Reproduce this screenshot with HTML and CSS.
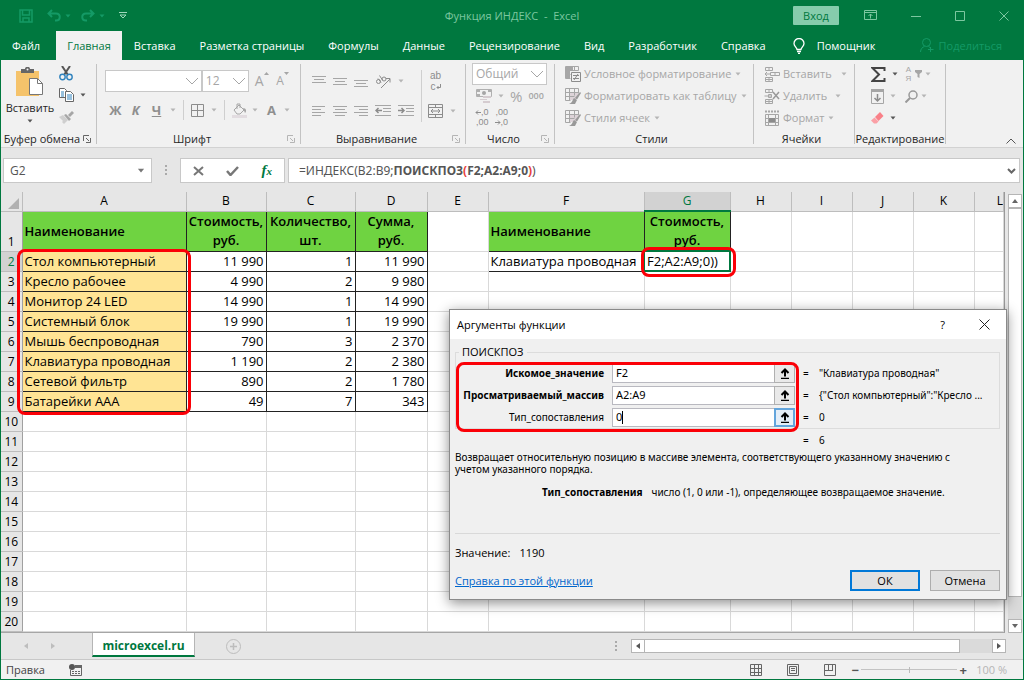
FILE: index.html
```
<!DOCTYPE html>
<html lang="ru">
<head>
<meta charset="utf-8">
<title>Функция ИНДЕКС - Excel</title>
<link rel="stylesheet" href="styles.css">
</head>
<body>
<svg class="sprite" aria-hidden="true">
  <symbol id="caret" viewBox="0 0 6 4"><path d="M0.5 0.5h5L3 3.5z" fill="currentColor"/></symbol>
  <symbol id="chev" viewBox="0 0 14 8"><path d="M1 1l6 6 6-6" fill="none" stroke="currentColor"/></symbol>
  <symbol id="launch" viewBox="0 0 8 8"><path d="M.5 6V.5H6M3 3l3 3M7.500 3v4.500H3" fill="none" stroke="currentColor"/></symbol>
  <symbol id="pick" viewBox="0 0 10 11"><path d="M1 10.500h8" stroke="#000" stroke-width="1.500"/><path d="M5 8.500V2M1.500 5L5 1.500 8.500 5" fill="none" stroke="#000" stroke-width="2"/></symbol>
  <symbol id="tablebrush" viewBox="0 0 16 16"><path d="M5 5h8v5l-4 2H5z" fill="#ddd3d8"/><path d="M.5 .5h13v5M.5 .5v12h5M.5 4.500h13M.5 8.500h9M4.500 .5v12M9.500 .5v7" fill="none" stroke="#a6a6a6"/><path d="M15 4l-5 6 2 1.500L16 5z" fill="#999"/><path d="M9 10l3 2-2 4H4c3-1 3-3 5-6z" fill="#999"/></symbol>
</svg>
<div class="app">
  <header class="titlebar">
    <div class="quick">
      <button class="plain" aria-label="Сохранить"><svg width="14" height="14" viewBox="0 0 14 14"><path d="M1 1h12v12H1zM3.500 1v5h7V1M4 13V9h6v4" fill="none" stroke="currentColor" stroke-width="1.500"/></svg></button>
      <button class="plain undo" aria-label="Отменить"><svg width="14" height="13" viewBox="0 0 14 13"><path d="M5 1L1.500 4.500 5 8M2 4.500h7c5 0 5 7 0 7H8" fill="none" stroke="currentColor" stroke-width="2"/></svg><svg class="caret"><use href="#caret"/></svg></button>
      <button class="plain redo" aria-label="Вернуть"><svg width="14" height="13" viewBox="0 0 14 13"><path d="M9 1l3.500 3.500L9 8M12 4.500H5c-5 0-5 7 0 7h1" fill="none" stroke="currentColor" stroke-width="2"/></svg><svg class="caret"><use href="#caret"/></svg></button>
      <button class="plain more" aria-label="Настройка панели"><svg width="8" height="8" viewBox="0 0 8 8"><path d="M0 .5h8M1 3l3 3 3-3z" fill="none" stroke="currentColor"/></svg></button>
    </div>
    <div class="doc-title">Функция ИНДЕКС&nbsp; -&nbsp; Excel</div>
    <div class="window">
      <button class="login">Вход</button>
      <button class="plain" aria-label="Параметры ленты"><svg width="13" height="11" viewBox="0 0 13 11"><path d="M.5 .5h12v9H.5zM.5 2.500h12M6.500 8.500V4M4.500 6l2-2 2 2" fill="none" stroke="currentColor"/></svg></button>
      <button class="plain" aria-label="Свернуть"><svg width="10" height="10" viewBox="0 0 10 10"><path d="M0 5.500h10" stroke="currentColor"/></svg></button>
      <button class="plain" aria-label="Развернуть"><svg width="10" height="10" viewBox="0 0 10 10"><path d="M.5 .5h9v9h-9z" fill="none" stroke="currentColor"/></svg></button>
      <button class="plain" aria-label="Закрыть"><svg width="10" height="10" viewBox="0 0 10 10"><path d="M.5 .5l9 9M9.500 .5l-9 9" stroke="currentColor"/></svg></button>
    </div>
  </header>

  <nav class="tabs">
    <button class="tab">Файл</button>
    <button class="tab active">Главная</button>
    <button class="tab">Вставка</button>
    <button class="tab">Разметка страницы</button>
    <button class="tab">Формулы</button>
    <button class="tab">Данные</button>
    <button class="tab">Рецензирование</button>
    <button class="tab">Вид</button>
    <button class="tab">Разработчик</button>
    <button class="tab">Справка</button>
    <button class="tab tell"><svg width="12" height="16" viewBox="0 0 12 16"><path d="M4 11.500c0-2-3-3-3-6a5 5 0 0 1 10 0c0 3-3 4-3 6zM4 13.500h4M5 15.500h2" fill="none" stroke="currentColor" stroke-width="1.300"/></svg>Помощник</button>
    <button class="tab share"><svg width="14" height="15" viewBox="0 0 14 15"><circle cx="6.500" cy="4.500" r="4" fill="none" stroke="currentColor"/><path d="M.5 14c0-3 2-5 4-5.500M8.500 8.500l1.500 1M10.500 9v5M8 11.500h5.500" fill="none" stroke="currentColor"/></svg>Поделиться</button>
  </nav>

  <section class="ribbon">
    <div class="group g-clip">
      <div class="tools">
        <button class="plain paste"><svg width="28" height="30" viewBox="0 0 28 30"><path d="M0 4h23v25H0z" fill="#f5c36b"/><path d="M5 2h4c0-3 5-3 5 0h4v4H5z" fill="#666"/><circle cx="11.500" cy="2.500" r="1" fill="#f1f1f1"/><path d="M13.500 11.500h8l5 5v11h-13z" fill="#fff" stroke="#777"/><path d="M21.500 11.500v5h5" fill="none" stroke="#777"/></svg><span>Вставить</span><svg class="caret dark"><use href="#caret"/></svg></button>
        <div class="stack">
          <button class="plain" aria-label="Вырезать"><svg width="14" height="15" viewBox="0 0 14 15"><path d="M3 0l6 9M11 0L5 9" stroke="#555" stroke-width="2"/><circle cx="3.500" cy="11" r="2.700" fill="none" stroke="#2f82bd" stroke-width="1.400"/><circle cx="10.500" cy="11" r="2.700" fill="none" stroke="#2f82bd" stroke-width="1.400"/></svg></button>
          <button class="plain" aria-label="Копировать"><svg width="15" height="14" viewBox="0 0 15 14"><path d="M.5 .5h5l2 2v7h-7z" fill="#fff" stroke="#666"/><path d="M2 4h3M2 6h3M2 8h3" stroke="#2f82bd"/><path d="M6.500 3.500h5l3 3v7h-8z" fill="#fff" stroke="#666"/><path d="M8 7h5M8 9h5M8 11h5" stroke="#2f82bd"/></svg><svg class="caret dark"><use href="#caret"/></svg></button>
          <button class="plain" aria-label="Формат по образцу"><svg width="15" height="13" viewBox="0 0 15 13"><path d="M0 6l4-2 5 5-4 4-2-2 1-1z" fill="#cfcfcf"/><path d="M5 4l2-1 5 5-2 2zM9 4l4-4 2 2-4 4z" fill="#a6a6a6"/></svg></button>
        </div>
      </div>
      <footer><span>Буфер обмена</span><svg class="launch dark"><use href="#launch"/></svg></footer>
    </div>

    <div class="group g-font">
      <div class="tools rows">
        <div class="row">
          <span class="combo wide"><select aria-label="Шрифт"><option></option></select><svg class="chev"><use href="#chev"/></svg></span>
          <span class="combo size"><select aria-label="Размер шрифта"><option>12</option></select><svg class="chev"><use href="#chev"/></svg></span>
          <button class="plain grow">A<svg width="5" height="3" viewBox="0 0 5 3"><path d="M0 3h5L2.500 0z" fill="currentColor"/></svg></button>
          <button class="plain grow small">A<svg width="5" height="3" viewBox="0 0 5 3"><path d="M0 0h5L2.500 3z" fill="currentColor"/></svg></button>
        </div>
        <div class="letters">
          <button class="plain">Ж</button><button class="plain ital">К</button><button class="plain under">Ч</button><svg class="caret"><use href="#caret"/></svg>
          <i class="bar"></i>
          <button class="plain" aria-label="Границы"><svg width="13" height="13" viewBox="0 0 13 13"><path d="M.5 .5h12v12H.5zM.5 6.500h12M6.500 .5v12" fill="none" stroke="#8c8c8c"/></svg></button><svg class="caret"><use href="#caret"/></svg>
          <i class="bar"></i>
          <button class="plain" aria-label="Цвет заливки"><svg width="15" height="15" viewBox="0 0 15 15"><path d="M2 7l5-5 5 5-4 4H5zM5 6V1h3v4" fill="#f1f1f1" stroke="#a6a6a6"/><path d="M11 5c3 0 4 3 2 5z" fill="#a6a6a6"/><path d="M0 12h15v3H0z" fill="#e2dce0"/></svg></button><svg class="caret"><use href="#caret"/></svg>
          <button class="plain">А</button><svg class="caret"><use href="#caret"/></svg>
        </div>
      </div>
      <footer><span>Шрифт</span><svg class="launch"><use href="#launch"/></svg></footer>
    </div>

    <div class="group g-align">
      <div class="tools">
        <div class="alignments">
          <button class="plain" aria-label="По верхнему краю"><svg width="14" height="11" viewBox="0 0 14 11"><path d="M0 .5h14M2 3.500h10M0 6.500h14" stroke="#a6a6a6"/></svg></button>
          <button class="plain" aria-label="По середине"><svg width="14" height="11" viewBox="0 0 14 11"><path d="M0 2.500h14M2 5.500h10M0 8.500h14" stroke="#a6a6a6"/></svg></button>
          <button class="plain" aria-label="По нижнему краю"><svg width="14" height="11" viewBox="0 0 14 11"><path d="M0 4.500h14M2 7.500h10M0 10.500h14" stroke="#a6a6a6"/></svg></button>
          <button class="plain orient" aria-label="Ориентация"><svg width="16" height="15" viewBox="0 0 16 15"><circle cx="3.500" cy="7.500" r="2" fill="none" stroke="#8c8c8c"/><circle cx="9" cy="5" r="2" fill="none" stroke="#8c8c8c"/><path d="M3 4.500l3 4M4.500 1.500l3 4.500M6 14L15 5M11 4.500h4v4" fill="none" stroke="#8c8c8c"/></svg></button><svg class="caret"><use href="#caret"/></svg>
          <button class="plain" aria-label="По левому краю"><svg width="14" height="11" viewBox="0 0 14 11"><path d="M0 .5h13M0 3.500h9M0 6.500h13M0 9.500h9" stroke="#a6a6a6"/></svg></button>
          <button class="plain" aria-label="По центру"><svg width="14" height="11" viewBox="0 0 14 11"><path d="M0 .5h14M2 3.500h10M0 6.500h14M2 9.500h10" stroke="#a6a6a6"/></svg></button>
          <button class="plain" aria-label="По правому краю"><svg width="14" height="11" viewBox="0 0 14 11"><path d="M0 .5h14M5 3.500h9M0 6.500h14M5 9.500h9" stroke="#a6a6a6"/></svg></button>
          <button class="plain" aria-label="Уменьшить отступ"><svg width="16" height="12" viewBox="0 0 16 12"><path d="M0 .5h16M8 3.500h8M8 6.500h8M0 10.500h16" stroke="#a6a6a6"/><path d="M7 5.500H1M3.500 3L1 5.500 3.500 8" fill="none" stroke="#8c8c8c" stroke-width="1.500"/></svg></button>
          <button class="plain" aria-label="Увеличить отступ"><svg width="16" height="12" viewBox="0 0 16 12"><path d="M0 .5h16M8 3.500h8M8 6.500h8M0 10.500h16" stroke="#a6a6a6"/><path d="M0 5.500h6M3.500 3L6 5.500 3.500 8" fill="none" stroke="#8c8c8c" stroke-width="1.500"/></svg></button>
        </div>
        <i class="bar tall"></i>
        <div class="wraps">
          <button class="plain wrap"><span>ab</span><span>c<svg width="5" height="6" viewBox="0 0 5 6"><path d="M4.500 0v3.500H1M2.500 2L1 3.500 2.500 5" fill="none" stroke="currentColor"/></svg></span></button>
          <button class="plain" aria-label="Объединить"><svg width="15" height="14" viewBox="0 0 15 14"><path d="M.5 .5h14v13H.5zM.5 3.500h14M.5 10.500h14M7.500 .5v3M7.500 10.500v3M3 7h9M5 5L3 7l2 2M10 5l2 2-2 2" fill="none" stroke="#8c8c8c"/></svg><svg class="caret"><use href="#caret"/></svg></button>
        </div>
      </div>
      <footer><span>Выравнивание</span><svg class="launch"><use href="#launch"/></svg></footer>
    </div>

    <div class="group g-num">
      <div class="tools rows">
        <span class="combo fmt"><select aria-label="Числовой формат"><option>Общий</option></select><svg class="chev"><use href="#chev"/></svg></span>
        <div class="row numrow">
          <button class="plain" aria-label="Финансовый"><svg width="16" height="14" viewBox="0 0 16 14"><path d="M.5 .5h15v7H.5z" fill="none" stroke="#b0b0b0"/><path d="M1 1h3v2H1zM12 1h3v2h-3zM1 5h3v2H1z" fill="#b0b0b0"/><circle cx="8" cy="4" r="2" fill="#a6a6a6"/><path d="M7 7h8v2H7zM4 10h7v1H4zM7 12h7v2H7z" fill="#d5ccd0"/></svg></button><svg class="caret"><use href="#caret"/></svg>
          <button class="plain pct">%</button><button class="plain ooo">000</button>
        </div>
        <div class="row decrow">
          <button class="plain dec"><span><svg width="6" height="5" viewBox="0 0 6 5"><path d="M6 2.500H1M3 .5l-2 2 2 2" fill="none" stroke="currentColor"/></svg>,0</span><span>,00</span></button>
          <button class="plain dec"><span>,00</span><span><svg width="6" height="5" viewBox="0 0 6 5"><path d="M0 2.500h5M3 .5l2 2-2 2" fill="none" stroke="currentColor"/></svg>,0</span></button>
        </div>
      </div>
      <footer><span>Число</span><svg class="launch"><use href="#launch"/></svg></footer>
    </div>

    <div class="group g-styles">
      <div class="tools list">
        <button class="plain"><svg width="16" height="16" viewBox="0 0 16 16"><path d="M.5 .5h13v4M.5 .5v12h5M.5 4.500h13M.5 8.500h5M4.500 .5v12M9.500 .5v4" fill="none" stroke="#a6a6a6"/><path d="M1 1h7v3H1zM1 5h3v7H1z" fill="#a6a6a6"/><path d="M6.500 6.500h9v9h-9z" fill="#f1f1f1" stroke="#8c8c8c"/><path d="M8 9.500h6M8 12.500h6M13 8l-4 6" stroke="#8c8c8c"/></svg>Условное форматирование<svg class="caret"><use href="#caret"/></svg></button>
        <button class="plain"><svg width="16" height="16"><use href="#tablebrush"/></svg>Форматировать как таблицу<svg class="caret"><use href="#caret"/></svg></button>
        <button class="plain"><svg width="16" height="16"><use href="#tablebrush"/></svg>Стили ячеек<svg class="caret"><use href="#caret"/></svg></button>
      </div>
      <footer><span>Стили</span></footer>
    </div>

    <div class="group g-cells">
      <div class="tools list">
        <button class="plain w1"><svg width="16" height="15" viewBox="0 0 16 15"><path d="M1.500 .5h7v3h-7zM5 .5v3M1.500 10.500h7v4h-7zM5 10.500v4M1 12.500h8M6.500 5.500h9v3h-9zM11 5.500v3M6 7H1M3 5L1 7l2 2" fill="none" stroke="#a6a6a6"/></svg><span>Вставить</span><svg class="caret"><use href="#caret"/></svg></button>
        <button class="plain w2"><svg width="16" height="15" viewBox="0 0 16 15"><path d="M1.500 .5h7v3h-7zM5 .5v3M1.500 10.500h7v4h-7zM5 10.500v4M1 12.500h8M.5 7h7M4.500 5.500h3v3h-3z" fill="none" stroke="#a6a6a6"/><path d="M9 3l6 7M15 3L9 10" stroke="#999" stroke-width="1.500"/></svg><span>Удалить</span><svg class="caret"><use href="#caret"/></svg></button>
        <button class="plain"><svg width="16" height="16" viewBox="0 0 16 16"><path d="M1.500 4.500h13v11h-13zM1 8.500h14M1 12.500h14M4.500 5v10M11.500 5v10" fill="none" stroke="#a6a6a6"/><path d="M5 8h6v4H5z" fill="#8c8c8c"/><path d="M1 1.500h14" stroke="#a6a6a6" stroke-width="2" stroke-dasharray="2 1"/></svg><span>Формат</span><svg class="caret"><use href="#caret"/></svg></button>
      </div>
      <footer><span>Ячейки</span></footer>
    </div>

    <div class="group g-edit">
      <div class="tools edits">
        <button class="plain" aria-label="Сумма"><svg width="15" height="15" viewBox="0 0 15 15"><path d="M13.500 4V1H1.500l6.500 6.500L1.500 14h12v-3" fill="none" stroke="#444" stroke-width="2"/></svg><svg class="caret dark"><use href="#caret"/></svg></button>
        <button class="plain" aria-label="Сортировка и фильтр"><span class="az"><span>А</span><span>Я</span></span><svg width="7" height="8" viewBox="0 0 7 8"><path d="M0 0h7v2L4.500 4v4l-2-1V4L0 2z" fill="currentColor"/></svg><svg class="caret"><use href="#caret"/></svg></button>
        <button class="plain" aria-label="Заполнить"><svg width="13" height="15" viewBox="0 0 13 15"><path d="M.5 .5h12v14H.5z" fill="none" stroke="#a6a6a6"/><path d="M0 0h13v3H0z" fill="#a6a6a6"/><path d="M6.500 5v7M3.500 9l3 3 3-3" fill="none" stroke="#8c8c8c" stroke-width="1.500"/></svg><svg class="caret"><use href="#caret"/></svg></button>
        <button class="plain" aria-label="Найти и выделить"><svg width="13" height="13" viewBox="0 0 13 13"><circle cx="8" cy="5" r="4" fill="none" stroke="#999" stroke-width="1.500"/><path d="M5 8l-4.500 4.500" stroke="#999" stroke-width="2"/></svg><svg class="caret"><use href="#caret"/></svg></button>
        <button class="plain" aria-label="Очистить"><svg width="13" height="12" viewBox="0 0 13 12"><path d="M4 5l5-5 3.500 4-5 5z" fill="#f98088"/><path d="M3.500 5.500l4 4-2 2H3L0 8.500z" fill="#fba0a6"/></svg><svg class="caret dark"><use href="#caret"/></svg></button>
      </div>
      <footer><span>Редактирование</span></footer>
    </div>
    <button class="plain collapse" aria-label="Свернуть ленту"><svg width="10" height="6" viewBox="0 0 10 6"><path d="M.5 5.500L5 1l4.500 4.500" fill="none" stroke="#555"/></svg></button>
  </section>

  <section class="formula-bar">
    <div class="namebox"><input aria-label="Имя" value="G2"><svg class="caret big"><use href="#caret"/></svg></div>
    <span class="dots"></span>
    <div class="fx">
      <button class="plain" aria-label="Отмена ввода"><svg width="11" height="10" viewBox="0 0 11 10"><path d="M1 1l9 8M10 1L1 9" stroke="#777" stroke-width="2"/></svg></button>
      <button class="plain" aria-label="Ввод"><svg width="13" height="10" viewBox="0 0 13 10"><path d="M1 5l3.500 4L12 1" fill="none" stroke="#777" stroke-width="2.500"/></svg></button>
      <button class="plain fxbtn" aria-label="Вставить функцию"><em>f</em><sub>x</sub></button>
    </div>
    <div class="formula"><code>=ИНДЕКС(B2:B9;<b>ПОИСКПОЗ<span class="red">(</span>F2;A2:A9;0<span class="red">)</span></b>)</code><svg width="9" height="6" viewBox="0 0 9 6"><path d="M1 1l3.500 3.500L8 1" fill="none" stroke="#666" stroke-width="2"/></svg></div>
  </section>

  <main class="sheet">
    <div class="viewport">
      <table>
        <colgroup><col class="c0"><col class="ca"><col class="cb"><col class="cc"><col class="cd"><col class="cn"><col class="cf"><col class="cg"><col class="cn"><col class="cn"><col class="cn"><col class="cn"><col></colgroup>
        <thead><tr><th class="corner"><svg width="11" height="11" viewBox="0 0 11 11"><path d="M11 0v11H0z" fill="#b1b1b1"/></svg></th><th>A</th><th>B</th><th>C</th><th>D</th><th>E</th><th>F</th><th class="sel">G</th><th>H</th><th>I</th><th>J</th><th>K</th><th class="last">L</th></tr></thead>
        <tbody>
        <tr class="head"><th>1</th><td class="h l">Наименование</td><td class="h">Стоимость, руб.</td><td class="h">Количество, шт.</td><td class="h">Сумма, руб.</td><td></td><td class="h l">Наименование</td><td class="h">Стоимость, руб.</td><td></td><td></td><td></td><td></td><td></td></tr>
        <tr><th class="sel">2</th><td class="y">Стол компьютерный</td><td class="n">11 990</td><td class="n">1</td><td class="n">11 990</td><td></td><td class="t">Клавиатура проводная</td><td class="edit">F2;A2:A9;0))</td><td></td><td></td><td></td><td></td><td></td></tr>
        <tr><th>3</th><td class="y">Кресло рабочее</td><td class="n">4 990</td><td class="n">2</td><td class="n">9 980</td><td></td><td></td><td></td><td></td><td></td><td></td><td></td><td></td></tr>
        <tr><th>4</th><td class="y">Монитор 24 LED</td><td class="n">14 990</td><td class="n">1</td><td class="n">14 990</td><td></td><td></td><td></td><td></td><td></td><td></td><td></td><td></td></tr>
        <tr><th>5</th><td class="y">Системный блок</td><td class="n">19 990</td><td class="n">1</td><td class="n">19 990</td><td></td><td></td><td></td><td></td><td></td><td></td><td></td><td></td></tr>
        <tr><th>6</th><td class="y">Мышь беспроводная</td><td class="n">790</td><td class="n">3</td><td class="n">2 370</td><td></td><td></td><td></td><td></td><td></td><td></td><td></td><td></td></tr>
        <tr><th>7</th><td class="y">Клавиатура проводная</td><td class="n">1 190</td><td class="n">2</td><td class="n">2 380</td><td></td><td></td><td></td><td></td><td></td><td></td><td></td><td></td></tr>
        <tr><th>8</th><td class="y">Сетевой фильтр</td><td class="n">890</td><td class="n">2</td><td class="n">1 780</td><td></td><td></td><td></td><td></td><td></td><td></td><td></td><td></td></tr>
        <tr><th>9</th><td class="y">Батарейки ААА</td><td class="n">49</td><td class="n">7</td><td class="n">343</td><td></td><td></td><td></td><td></td><td></td><td></td><td></td><td></td></tr>
        <tr><th>10</th><td></td><td></td><td></td><td></td><td></td><td></td><td></td><td></td><td></td><td></td><td></td><td></td></tr>
        <tr><th>11</th><td></td><td></td><td></td><td></td><td></td><td></td><td></td><td></td><td></td><td></td><td></td><td></td></tr>
        <tr><th>12</th><td></td><td></td><td></td><td></td><td></td><td></td><td></td><td></td><td></td><td></td><td></td><td></td></tr>
        <tr><th>13</th><td></td><td></td><td></td><td></td><td></td><td></td><td></td><td></td><td></td><td></td><td></td><td></td></tr>
        <tr><th>14</th><td></td><td></td><td></td><td></td><td></td><td></td><td></td><td></td><td></td><td></td><td></td><td></td></tr>
        <tr><th>15</th><td></td><td></td><td></td><td></td><td></td><td></td><td></td><td></td><td></td><td></td><td></td><td></td></tr>
        <tr><th>16</th><td></td><td></td><td></td><td></td><td></td><td></td><td></td><td></td><td></td><td></td><td></td><td></td></tr>
        <tr><th>17</th><td></td><td></td><td></td><td></td><td></td><td></td><td></td><td></td><td></td><td></td><td></td><td></td></tr>
        <tr><th>18</th><td></td><td></td><td></td><td></td><td></td><td></td><td></td><td></td><td></td><td></td><td></td><td></td></tr>
        <tr><th>19</th><td></td><td></td><td></td><td></td><td></td><td></td><td></td><td></td><td></td><td></td><td></td><td></td></tr>
        <tr><th>20</th><td></td><td></td><td></td><td></td><td></td><td></td><td></td><td></td><td></td><td></td><td></td><td></td></tr>
        </tbody>
      </table>
    </div>
    <div class="vscroll">
      <button class="sb" aria-label="Вверх"><svg width="6" height="4" viewBox="0 0 6 4"><path d="M0 4h6L3 0z" fill="#666"/></svg></button>
      <div class="vthumb"></div><div class="vtrack"></div>
      <button class="sb" aria-label="Вниз"><svg width="6" height="4" viewBox="0 0 6 4"><path d="M0 0h6L3 4z" fill="#666"/></svg></button>
    </div>
    <div class="mark mark-list"></div>
    <div class="mark mark-cell"></div>

    <section class="dialog" role="dialog" aria-label="Аргументы функции">
      <header><h2>Аргументы функции</h2><button class="plain help">?</button><button class="plain" aria-label="Закрыть окно"><svg width="11" height="11" viewBox="0 0 11 11"><path d="M.5 .5l10 10M10.500 .5l-10 10" stroke="#222"/></svg></button></header>
      <div class="dlg-body">
        <fieldset>
          <legend>ПОИСКПОЗ</legend>
          <div class="arg"><label class="req" for="a1">Искомое_значение</label><span class="field"><input id="a1" value="F2"><button aria-label="Выбрать ячейку"><svg width="10" height="11"><use href="#pick"/></svg></button></span><span>=</span><output>"Клавиатура проводная"</output></div>
          <div class="arg"><label class="req" for="a2">Просматриваемый_массив</label><span class="field"><input id="a2" value="A2:A9"><button aria-label="Выбрать диапазон"><svg width="10" height="11"><use href="#pick"/></svg></button></span><span>=</span><output>{"Стол компьютерный":"Кресло ...</output></div>
          <div class="arg"><label for="a3">Тип_сопоставления</label><span class="field focus"><input id="a3" value="0"><i class="cursor"></i><button aria-label="Выбрать тип"><svg width="10" height="11"><use href="#pick"/></svg></button></span><span>=</span><output>0</output></div>
          <div class="mark mark-args"></div>
        </fieldset>
        <div class="arg total"><span></span><span></span><span>=</span><output>6</output></div>
        <p class="desc">Возвращает относительную позицию в массиве элемента, соответствующего указанному значению с учетом указанного порядка.</p>
        <p class="arghelp"><b>Тип_сопоставления</b><span>число (1, 0 или -1), определяющее возвращаемое значение.</span></p>
        <hr>
        <p class="result"><span>Значение:</span><span>1190</span></p>
        <div class="actions"><a href="#help">Справка по этой функции</a><button class="ok">ОК</button><button>Отмена</button></div>
      </div>
    </section>
  </main>

  <section class="sheetbar">
    <div class="arrows"><button class="plain" aria-label="Предыдущий лист"><svg width="4" height="6" viewBox="0 0 4 6"><path d="M4 0v6L0 3z" fill="#bdbdbd"/></svg></button><button class="plain" aria-label="Следующий лист"><svg width="4" height="6" viewBox="0 0 4 6"><path d="M0 0v6l4-3z" fill="#bdbdbd"/></svg></button></div>
    <button class="sheet-tab">microexcel.ru</button>
    <button class="plain add" aria-label="Новый лист"><svg width="15" height="15" viewBox="0 0 15 15"><circle cx="7.500" cy="7.500" r="7" fill="none" stroke="#bdbdbd"/><path d="M7.500 4v7M4 7.500h7" stroke="#bdbdbd" stroke-width="1.500"/></svg></button>
    <span class="dots end"></span>
    <div class="hscroll">
      <button class="sb" aria-label="Влево"><svg width="4" height="6" viewBox="0 0 4 6"><path d="M4 0v6L0 3z" fill="#555"/></svg></button>
      <div class="hthumb"></div><div class="htrack"></div>
      <button class="sb" aria-label="Вправо"><svg width="4" height="6" viewBox="0 0 4 6"><path d="M0 0v6l4-3z" fill="#555"/></svg></button>
    </div>
  </section>

  <footer class="status">
    <span>Правка</span>
    <button class="plain macro" aria-label="Запись макроса"><svg width="13" height="12" viewBox="0 0 13 12"><path d="M6 1.500h6.500v10h-11V6" fill="none" stroke="#666"/><path d="M6 1h7v3H6z" fill="#666"/><circle cx="3" cy="3" r="3" fill="#555"/><path d="M3 7.500h8M3 9.500h8" stroke="#666" stroke-dasharray="2 1"/></svg></button>
    <div class="views">
      <button class="plain" aria-label="Обычный"><svg width="12" height="12" viewBox="0 0 12 12"><path d="M.5 .5h11v11H.5zM.5 4.500h11M.5 8.500h11M4.500 .5v11M8.500 .5v11" fill="none" stroke="#666"/></svg></button>
      <button class="plain" aria-label="Разметка страницы"><svg width="12" height="12" viewBox="0 0 12 12"><path d="M.5 .5h11v11H.5zM2.500 2.500h7v7h-7zM4 4.500h4M4 6.500h4" fill="none" stroke="#666"/></svg></button>
      <button class="plain" aria-label="Страничный режим"><svg width="12" height="12" viewBox="0 0 12 12"><path d="M.5 .5h11v11H.5zM4.500 .5v6M8.500 .5v6M0 6.500h9" fill="none" stroke="#666"/></svg></button>
    </div>
    <div class="zoom"><button class="plain">−</button><input type="range" aria-label="Масштаб" min="10" max="190" value="100"><button class="plain">+</button><span>100 %</span></div>
  </footer>
</div>
</body>
</html>
```
FILE: styles.css
```
* { box-sizing: border-box; }
body { margin: 0; font: 11px/14px "Open Sans", "Noto Sans", sans-serif; color: #262626; }
button, input, select { font: inherit; color: inherit; }
svg { display: block; flex: none; }
p, h2 { margin: 0; font-size: inherit; font-weight: normal; }
.sprite { position: absolute; width: 0; height: 0; }
.plain { display: flex; align-items: center; border: 0; padding: 0; background: none; white-space: nowrap; }
.caret { width: 6px; height: 4px; color: #b5b5b5; }
.caret.dark { color: #555; }
.dark { color: #666; }

.app { display: flex; flex-direction: column; min-height: 100vh; background: #e6e6e6; border: solid #00783f; border-width: 0 1px 1px; }

/* title bar */
.titlebar { display: grid; grid-template-columns: 1fr auto 1fr; align-items: center; height: 31px; background: #00783f; color: #7cc7a0; }
.quick { display: flex; align-items: center; gap: 14px; padding-left: 18px; color: #149a66; }
.quick .caret { color: #149a66; }
.quick .undo, .quick .redo { gap: 4px; }
.quick .redo { margin-left: -4px; }
.quick .more { color: #9fd8bc; }
.window { display: flex; align-items: center; justify-content: flex-end; gap: 34px; padding-right: 14px; }
.login { width: 46px; height: 19px; margin-right: -9px; padding: 0; border: 0; background: #86ccac; color: #00783f; border-radius: 1px; }

/* ribbon tabs */
.tabs { display: flex; height: 29px; background: #00783f; }
.tab { display: flex; align-items: center; border: 0; padding: 0 12px; background: none; color: #fff; font-weight: 500; white-space: nowrap; }
.tab:first-child { padding: 0 16px 0 11px; }
.tab.active { padding: 0 11px; background: #f1f1f1; color: #00783f; }
.tell { gap: 12px; padding-left: 15px; }
.share { gap: 5px; margin-left: auto; padding: 0 21px 0 0; color: #149a66; }

/* ribbon */
.ribbon { display: flex; height: 88px; padding: 4px 0 3px; background: #f1f1f1; border-bottom: 1px solid #d2d2d2; color: #a6a6a6; }
.group { display: flex; flex-direction: column; flex: none; border-right: 1px solid #c3c3c3; }
.group footer { display: flex; align-items: center; height: 10px; padding-right: 5px; color: #262626; line-height: 10px; }
.group footer span { flex: 1; text-align: center; white-space: nowrap; }
.launch { width: 8px; height: 8px; color: #b5b5b5; }
.launch.dark { color: #666; }
.tools { display: flex; flex: 1; }
.rows { flex-direction: column; }
.row { display: flex; align-items: center; }
.bar { width: 1px; height: 20px; background: #cfcfcf; }
.bar.tall { height: 52px; }
.g-clip { width: 96px; }
.g-font { width: 204px; }
.g-align { width: 165px; }
.g-num { width: 89px; }
.g-styles { width: 199px; }
.g-cells { width: 101px; }
.g-edit { width: 91px; }
.group.g-edit footer { padding: 0; justify-content: center; }
.paste { flex-direction: column; width: 58px; padding-top: 3px; gap: 4px; color: #262626; }
.stack { display: flex; flex-direction: column; gap: 8px; padding-top: 2px; }
.stack button { gap: 6px; height: 14px; }
.combo { display: flex; align-items: center; position: relative; height: 22px; }
.combo select { width: 100%; height: 100%; appearance: none; border: 1px solid #c8c8c8; border-radius: 0; background: #fff; padding: 0 3px; color: #a6a6a6; font-size: 12px; }
.chev { position: absolute; right: 3px; width: 14px; height: 8px; pointer-events: none; }
.combo.wide { width: 99px; }
.combo.size { width: 48px; }
.combo.fmt { width: 75px; }
.g-font .tools { padding: 6px 8px 0; gap: 8px; }
.grow { width: 22px; padding-left: 6px; align-items: flex-start; font-size: 14px; line-height: 18px; }
.grow.small { font-size: 12px; }
.letters { display: grid; grid-template-columns: 21px 19px 23px 9px 12px 17px 15px 7px 23px 8px 25px 6px; align-items: center; justify-items: center; color: #8f8f8f; font-size: 13px; font-weight: 700; }
.ital { font-style: italic; }
.under { text-decoration: underline; }
.g-align .tools { padding: 6px 9px 0 11px; justify-content: space-between; }
.alignments { display: grid; grid-template-columns: repeat(3, 14px) 16px 16px; gap: 8px 7px; align-items: center; align-content: start; grid-auto-rows: 22px; }
.alignments button { justify-content: center; }
.wraps { display: grid; grid-auto-rows: 22px; gap: 8px; align-content: start; }
.wraps button { gap: 7px; }
.wraps .wrap { flex-direction: column; gap: 0; width: 15px; font: 10px/11px "Liberation Sans", sans-serif; color: #8c8c8c; }
.wrap span { display: flex; align-items: center; }
.g-num .tools { padding-left: 6px; gap: 2px; }
.fmt { margin-top: -1px; }
.numrow { gap: 6px; height: 18px; padding-left: 4px; }
.pct { font-size: 15px; }
.ooo { font-size: 9px; font-weight: 600; }
.decrow { gap: 6px; height: 20px; padding-left: 3px; color: #8c8c8c; }
.dec { flex-direction: column; align-items: flex-end; font: 9px/10px "Liberation Sans", sans-serif; }
.dec span { display: flex; align-items: center; }
.list { flex-direction: column; padding: 2px 0 0 10px; gap: 6px; }
.list button { gap: 3px; height: 16px; }
.list .caret { margin-left: 1px; }
.list .w1 .caret { margin-left: 6px; }
.list .w2 .caret { margin-left: 5px; }
.edits { display: grid; grid-template-columns: 34px 30px; grid-auto-rows: 16px; gap: 6px 0; padding: 2px 0 0 16px; }
.edits button { gap: 6px; }
.edits button:nth-child(even) { gap: 3px; }
.az { display: flex; flex-direction: column; width: 7px; font: 8px/9px "Liberation Sans", sans-serif; }
.collapse { align-self: flex-end; margin: 0 7px 0 auto; }

/* formula bar */
.formula-bar { display: flex; height: 44px; padding: 10px 3px 9px 2px; }
.namebox, .fx, .formula { display: flex; align-items: center; border: 1px solid #c8c8c8; background: #fff; color: #555; }
.namebox { width: 149px; padding-right: 6px; }
.namebox input { flex: 1; min-width: 0; border: 0; padding: 0 6px; font-size: 12px; }
.caret.big { width: 8px; height: 5px; color: #777; }
.dots { width: 2px; height: 11px; margin: auto 13px; background: repeating-linear-gradient(#aaa 0 2px, transparent 2px 4px); }
.fx { width: 105px; margin-right: 3px; justify-content: space-between; padding: 0 12px; }
.fxbtn { color: #00783f; font: italic 700 15px "Liberation Serif", serif; }
.fxbtn sub { font-size: 11px; }
.formula { flex: 1; padding: 0 3px 0 10px; }
.formula code { flex: 1; font: 12px "Noto Sans", sans-serif; }
.red { color: #e8413c; }

/* sheet */
.sheet { position: relative; display: flex; flex: 1; min-height: 441px; }
.viewport { flex: 1; min-width: 0; overflow: hidden; background: #fff; border-right: 1px solid #999; border-bottom: 1px solid #a6a6a6; }
table { width: 100%; table-layout: fixed; border-collapse: collapse; font: 13px/19px "Open Sans", sans-serif; color: #000; }
.c0 { width: 21px; } .ca { width: 164px; } .cb { width: 80px; } .cc { width: 89px; } .cd { width: 72px; }
.cf { width: 156px; } .cg { width: 86px; } .cn { width: 61px; }
th, td { height: 20px; padding: 0 2px; border: 1px solid #d9d9d9; white-space: nowrap; overflow: hidden; }
th { padding: 0; background: #e6e6e6; font-weight: normal; font-size: 12px; border-color: #bdbdbd; border-left: 0; }
thead th { height: 19px; line-height: 18px; border-top: 0; }
tbody th { vertical-align: bottom; border-right-color: #a0a0a0; }
.corner { padding: 5px 3px 0 7px; }
thead .last { text-align: right; }
.sel { background: #d2d2d2; color: #00783f; }
thead .sel { border-bottom: 2px solid #00783f; }
.head td { height: 40px; white-space: normal; line-height: 19px; }
td.h { background: #6fd341; border-color: #222; font-weight: 600; text-align: center; padding: 0; }
td.h.l { text-align: left; padding: 0 2px; }
td.y, td.n, td.t { border-color: #222; }
td.y { background: #ffe494; }
td.n { text-align: right; }
td.edit { border: 2px solid #00783f; line-height: 18px; }
.vscroll { display: flex; flex-direction: column; width: 18px; padding: 2px 1px 0 3px; }
.sb { display: flex; align-items: center; justify-content: center; width: 14px; height: 14px; padding: 0; border: 1px solid #b5b5b5; background: #fff; }
.vthumb { flex: 390; border: 1px solid #b5b5b5; background: #fff; }
.vtrack { flex: 22; background: #dadada; }
.mark { position: absolute; border: 3px solid #fb0007; border-radius: 8px; }
.mark-list { left: 16px; top: 57px; width: 174px; height: 166px; }
.mark-cell { left: 640px; top: 55px; width: 95px; height: 30px; }

/* function arguments dialog */
.dialog { position: absolute; left: 448px; top: 117px; width: 558px; background: #f0f0f0; border: 1px solid #8a8a8a; box-shadow: 0 3px 12px rgba(0, 0, 0, .45); color: #000; }
.dialog > header { display: flex; align-items: center; height: 29px; padding: 0 16px 0 7px; background: #fff; }
.dialog h2 { flex: 1; }
.help { margin-right: 34px; }
.dlg-body { padding: 6px 6px 8px 5px; }
fieldset { position: relative; min-width: 0; margin: 0; padding: 3px 0 0; border: 1px solid #dcdcdc; }
legend { margin-left: 3px; padding: 0 3px; }
.arg { display: grid; grid-template-columns: 148px 183px 8px 1fr; align-items: center; column-gap: 8px; height: 22px; font-family: "Noto Sans", sans-serif; font-size: 10px; white-space: nowrap; }
.arg label { text-align: right; }
.req { font-weight: 700; }
.field { display: flex; position: relative; height: 19px; font-size: 11px; }
.field input { flex: 1; min-width: 0; border: 1px solid #b9b9c0; border-right: 0; padding: 0 3px; background: #fff; }
.field button { display: flex; align-items: center; justify-content: center; width: 21px; padding: 0; border: 1px solid #b0b0b0; background: #e9e9e9; }
.focus button { border: 2px solid #63a5dc; background: #e4eef8; }
.cursor { position: absolute; left: 10px; top: 3px; width: 1px; height: 13px; background: #000; }
.mark-args { left: 0; top: 3px; width: 343px; height: 70px; }
.total { padding-left: 1px; }
.desc, .arghelp { font-family: "Noto Sans", sans-serif; font-size: 10px; }
.desc { max-width: 530px; line-height: 12px; }
.arghelp { display: flex; gap: 9px; margin: 10px 0 34px 87px; white-space: nowrap; }
hr { margin: 0; border: 0; border-top: 1px solid #d9d9d9; }
.result { display: flex; gap: 9px; padding: 12px 0 10px; }
.actions { display: flex; align-items: center; gap: 10px; }
.actions a { margin-right: auto; color: #0066cc; }
.actions button { width: 70px; height: 21px; padding: 0; border: 1px solid #adadad; background: #e1e1e1; }
.actions .ok { border: 2px solid #0078d7; }

/* sheet tabs */
.sheetbar { display: flex; align-items: center; height: 27px; border-bottom: 1px solid #c8c8c8; }
.arrows { display: flex; gap: 23px; padding: 0 37px 0 23px; }
.sheet-tab { align-self: flex-start; width: 103px; height: 24px; padding: 3px 0 0; border: solid #b5b5b5; border-width: 0 1px; border-bottom: 2px solid #00783f; background: #fff; color: #00783f; font-size: 12px; font-weight: 700; }
.add { margin-left: 31px; }
.dots.end { margin: 0 14px 0 auto; }
.hscroll { display: flex; width: 375px; margin-right: 17px; }
.hthumb { flex: 314; border: 1px solid #b5b5b5; border-left: 0; background: #fff; }
.htrack { flex: 32; background: #dadada; }

/* status bar */
.status { display: flex; align-items: center; height: 19px; padding: 0 16px 0 5px; background: #f1f1f1; color: #444; }
.macro { margin-left: 24px; }
.views { display: flex; gap: 25px; margin-left: auto; }
.zoom { display: flex; align-items: center; gap: 2px; margin-left: 15px; color: #b5b5b5; }
.zoom button { width: 8px; justify-content: center; color: #555; font-size: 13px; font-weight: 700; }
.zoom span { margin-left: 7px; }
.zoom input { appearance: none; width: 96px; height: 6px; margin: 0; background: linear-gradient(#c3c3c3, #c3c3c3) center / 100% 1px no-repeat; }
.zoom input::-webkit-slider-thumb { appearance: none; width: 1px; height: 6px; background: #bbb; }
```
